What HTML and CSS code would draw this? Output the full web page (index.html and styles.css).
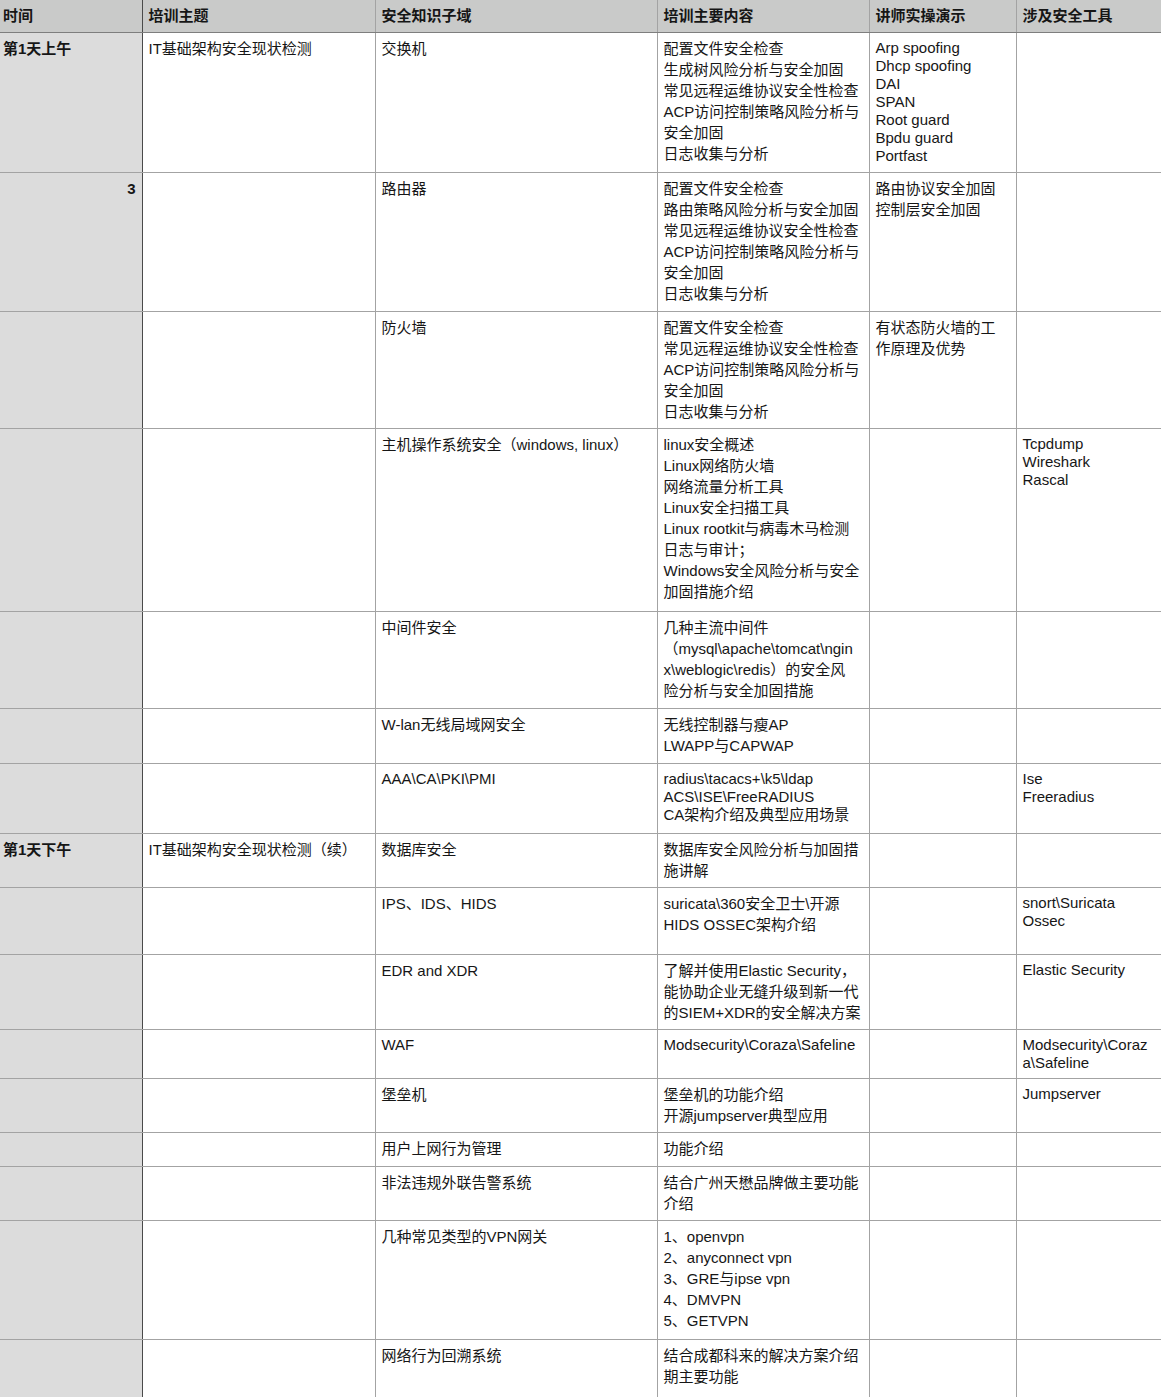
FILE: index.html
```html
<!DOCTYPE html>
<html lang="zh-CN">
<head>
<meta charset="utf-8">
<title>培训课程表</title>
<link rel="stylesheet" href="styles.css">
</head>
<body>
<table class="sheet">
  <colgroup>
    <col class="c1"><col class="c2"><col class="c3"><col class="c4"><col class="c5"><col class="c6">
  </colgroup>
  <thead>
    <tr>
      <th class="time">时间</th>
      <th>培训主题</th>
      <th>安全知识子域</th>
      <th>培训主要内容</th>
      <th>讲师实操演示</th>
      <th>涉及安全工具</th>
    </tr>
  </thead>
  <tbody>
    <tr class="row-sw">
      <td class="time"><b>第1天上午</b></td>
      <td>IT基础架构安全现状检测</td>
      <td>交换机</td>
      <td><div>配置文件安全检查</div><div>生成树风险分析与安全加固</div><div>常见远程运维协议安全性检查</div><div>ACP访问控制策略风险分析与</div><div>安全加固</div><div>日志收集与分析</div></td>
      <td class="latin"><div>Arp spoofing</div><div>Dhcp spoofing</div><div>DAI</div><div>SPAN</div><div>Root guard</div><div>Bpdu guard</div><div>Portfast</div></td>
      <td></td>
    </tr>
    <tr class="row-rt">
      <td class="time num"><b>3</b></td>
      <td></td>
      <td>路由器</td>
      <td><div>配置文件安全检查</div><div>路由策略风险分析与安全加固</div><div>常见远程运维协议安全性检查</div><div>ACP访问控制策略风险分析与</div><div>安全加固</div><div>日志收集与分析</div></td>
      <td><div>路由协议安全加固</div><div>控制层安全加固</div></td>
      <td></td>
    </tr>
    <tr class="row-fw">
      <td class="time"></td>
      <td></td>
      <td>防火墙</td>
      <td><div>配置文件安全检查</div><div>常见远程运维协议安全性检查</div><div>ACP访问控制策略风险分析与</div><div>安全加固</div><div>日志收集与分析</div></td>
      <td><div>有状态防火墙的工</div><div>作原理及优势</div></td>
      <td></td>
    </tr>
    <tr class="row-os">
      <td class="time"></td>
      <td></td>
      <td>主机操作系统安全（windows, linux）</td>
      <td><div>linux安全概述</div><div>Linux网络防火墙</div><div>网络流量分析工具</div><div>Linux安全扫描工具</div><div>Linux rootkit与病毒木马检测</div><div>日志与审计；</div><div>Windows安全风险分析与安全</div><div>加固措施介绍</div></td>
      <td></td>
      <td class="latin"><div>Tcpdump</div><div>Wireshark</div><div>Rascal</div></td>
    </tr>
    <tr class="row-mw">
      <td class="time"></td>
      <td></td>
      <td>中间件安全</td>
      <td><div>几种主流中间件</div><div>（mysql\apache\tomcat\ngin</div><div>x\weblogic\redis）的安全风</div><div>险分析与安全加固措施</div></td>
      <td></td>
      <td></td>
    </tr>
    <tr class="row-wlan">
      <td class="time"></td>
      <td></td>
      <td>W-lan无线局域网安全</td>
      <td><div>无线控制器与瘦AP</div><div>LWAPP与CAPWAP</div></td>
      <td></td>
      <td></td>
    </tr>
    <tr class="row-aaa">
      <td class="time"></td>
      <td></td>
      <td class="latin">AAA\CA\PKI\PMI</td>
      <td class="latin"><div>radius\tacacs+\k5\ldap</div><div>ACS\ISE\FreeRADIUS</div><div>CA架构介绍及典型应用场景</div></td>
      <td></td>
      <td class="latin"><div>Ise</div><div>Freeradius</div></td>
    </tr>
    <tr>
      <td class="time"><b>第1天下午</b></td>
      <td>IT基础架构安全现状检测（续）</td>
      <td>数据库安全</td>
      <td><div>数据库安全风险分析与加固措</div><div>施讲解</div></td>
      <td></td>
      <td></td>
    </tr>
    <tr class="row-ips">
      <td class="time"></td>
      <td></td>
      <td>IPS、IDS、HIDS</td>
      <td><div>suricata\360安全卫士\开源</div><div>HIDS OSSEC架构介绍</div></td>
      <td></td>
      <td class="latin"><div>snort\Suricata</div><div>Ossec</div></td>
    </tr>
    <tr class="row-edr">
      <td class="time"></td>
      <td></td>
      <td>EDR and XDR</td>
      <td><div>了解并使用Elastic Security，</div><div>能协助企业无缝升级到新一代</div><div>的SIEM+XDR的安全解决方案</div></td>
      <td></td>
      <td class="latin"><div>Elastic Security</div></td>
    </tr>
    <tr>
      <td class="time"></td>
      <td></td>
      <td class="latin">WAF</td>
      <td class="latin">Modsecurity\Coraza\Safeline</td>
      <td></td>
      <td class="latin"><div>Modsecurity\Coraz</div><div>a\Safeline</div></td>
    </tr>
    <tr>
      <td class="time"></td>
      <td></td>
      <td>堡垒机</td>
      <td><div>堡垒机的功能介绍</div><div>开源jumpserver典型应用</div></td>
      <td></td>
      <td class="latin"><div>Jumpserver</div></td>
    </tr>
    <tr class="row-user">
      <td class="time"></td>
      <td></td>
      <td>用户上网行为管理</td>
      <td>功能介绍</td>
      <td></td>
      <td></td>
    </tr>
    <tr>
      <td class="time"></td>
      <td></td>
      <td>非法违规外联告警系统</td>
      <td><div>结合广州天懋品牌做主要功能</div><div>介绍</div></td>
      <td></td>
      <td></td>
    </tr>
    <tr class="row-vpn">
      <td class="time"></td>
      <td></td>
      <td>几种常见类型的VPN网关</td>
      <td><div>1、openvpn</div><div>2、anyconnect vpn</div><div>3、GRE与ipse vpn</div><div>4、DMVPN</div><div>5、GETVPN</div></td>
      <td></td>
      <td></td>
    </tr>
    <tr class="row-last">
      <td class="time"></td>
      <td></td>
      <td>网络行为回溯系统</td>
      <td><div>结合成都科来的解决方案介绍</div><div>期主要功能</div></td>
      <td></td>
      <td></td>
    </tr>
  </tbody>
</table>
</body>
</html>
```

FILE: styles.css
```css
html, body {
  margin: 0;
  padding: 0;
  background: #ffffff;
}

body {
  font-family: "Liberation Sans", "Noto Sans CJK SC", sans-serif;
  font-size: 15px;
  color: #161616;
  overflow: hidden;
}

.sheet {
  border-collapse: collapse;
  table-layout: fixed;
  width: 1170px;
}

.c1 { width: 142px; }
.c2 { width: 233px; }
.c3 { width: 282px; }
.c4 { width: 212px; }
.c5 { width: 147px; }
.c6 { width: 154px; }

.sheet th {
  background: #c9cac9;
  height: 32px;
  padding: 0 6px;
  text-align: left;
  font-weight: bold;
  font-size: 15px;
  line-height: 18px;
  border-left: 1px solid #a3a3a3;
  border-bottom: 1px solid #7e7e7e;
  vertical-align: middle;
}

.sheet td {
  vertical-align: top;
  padding: 5px 6px 6px 6px;
  line-height: 21px;
  border-left: 1px solid #a3a3a3;
  border-bottom: 1px solid #a3a3a3;
}

.sheet td div {
  height: 21px;
  white-space: nowrap;
}

.sheet th.time,
.sheet td.time {
  border-left: none;
  padding-left: 3px;
  border-right: 1px solid #4a4a4a;
}

.sheet td.time {
  background: #dcdcdc;
}

.sheet td.num {
  text-align: right;
  padding-right: 6px;
}

.sheet td.latin {
  line-height: 18px;
  padding-top: 6px;
  padding-bottom: 6px;
}

.sheet td.latin div {
  height: 18px;
}

.row-sw { height: 140px; }
.row-rt { height: 139px; }
.row-fw { height: 117px; }
.row-os { height: 183px; }
.row-mw { height: 97px; }
.row-wlan { height: 55px; }
.row-aaa { height: 70px; }
.row-ips { height: 67px; }
.row-edr { height: 75px; }
.row-user { height: 34px; }
.row-vpn { height: 119px; }
.row-last { height: 70px; }
```
